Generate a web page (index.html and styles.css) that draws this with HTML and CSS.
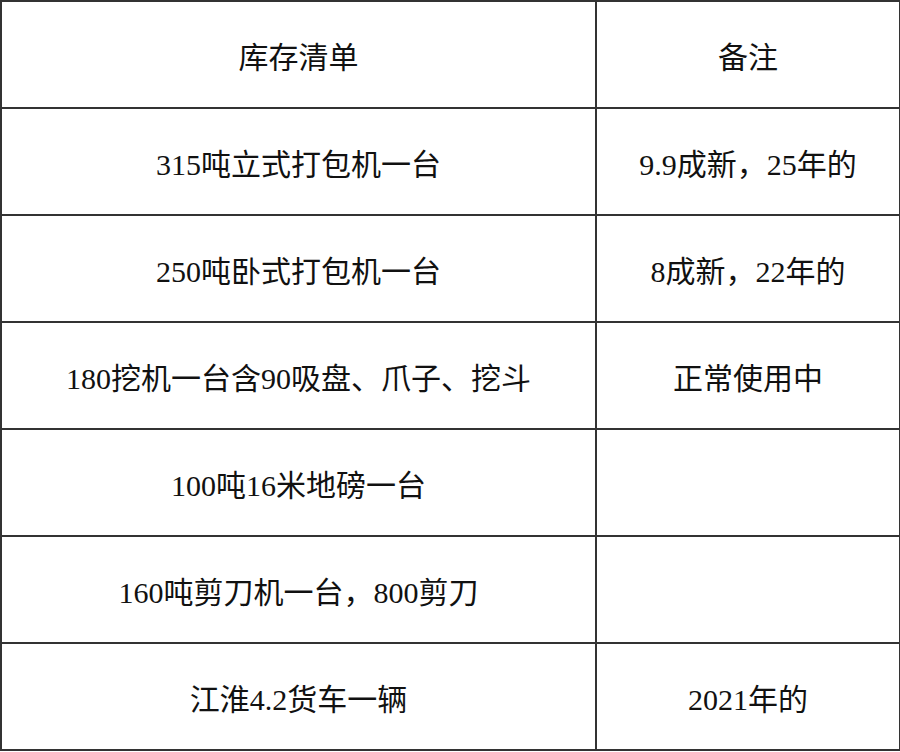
FILE: index.html
```html
<!DOCTYPE html>
<html lang="zh">
<head>
<meta charset="utf-8">
<link rel="stylesheet" href="styles.css">
</head>
<body>
<table class="inv">
  <colgroup><col class="c1"><col class="c2"></colgroup>
  <tr><td>库存清单</td><td>备注</td></tr>
  <tr><td>315吨立式打包机一台</td><td>9.9成新，25年的</td></tr>
  <tr><td>250吨卧式打包机一台</td><td>8成新，22年的</td></tr>
  <tr><td>180挖机一台含90吸盘、爪子、挖斗</td><td>正常使用中</td></tr>
  <tr><td>100吨16米地磅一台</td><td></td></tr>
  <tr><td>160吨剪刀机一台，800剪刀</td><td></td></tr>
  <tr><td>江淮4.2货车一辆</td><td>2021年的</td></tr>
</table>
</body>
</html>
```
FILE: styles.css
```css
html, body {
  margin: 0;
  padding: 0;
  background: #fff;
}
.inv {
  border-collapse: collapse;
  width: 899px;
  height: 751px;
  table-layout: fixed;
  font-family: "Liberation Serif", "Noto Sans CJK SC", serif;
  font-size: 30px;
  color: #111;
}
.c1 { width: 595px; }
.c2 { width: 304px; }
.inv td {
  border: 2px solid #333;
  height: 107px;
  text-align: center;
  vertical-align: middle;
  padding: 1px 0 0 0;
  box-sizing: border-box;
  white-space: nowrap;
}
```
